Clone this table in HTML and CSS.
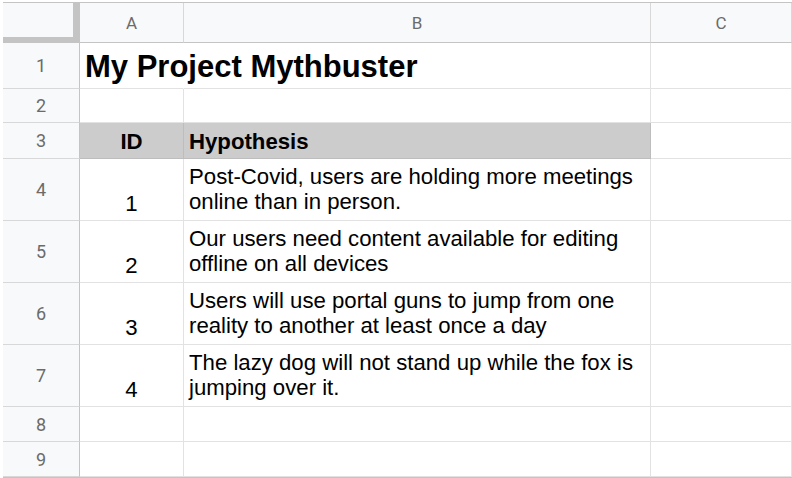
FILE: index.html
```html
<!DOCTYPE html>
<html>
<head>
<meta charset="utf-8">
<link rel="stylesheet" href="styles.css">
</head>
<body>
<div class="sheet">
  <div class="corner"></div>
  <div class="colhead">A</div>
  <div class="colhead">B</div>
  <div class="colhead">C</div>

  <div class="rowhead r1">1</div>
  <div class="cell r1 title">My Project Mythbuster</div>
  <div class="cell r1"></div>
  <div class="cell r1"></div>

  <div class="rowhead r2">2</div>
  <div class="cell r2"></div>
  <div class="cell r2"></div>
  <div class="cell r2"></div>

  <div class="rowhead r3">3</div>
  <div class="cell r3 th center">ID</div>
  <div class="cell r3 th">Hypothesis</div>
  <div class="cell r3"></div>

  <div class="rowhead r4">4</div>
  <div class="cell r4 center">1</div>
  <div class="cell r4 text">Post-Covid, users are holding more meetings online than in person.</div>
  <div class="cell r4"></div>

  <div class="rowhead r5">5</div>
  <div class="cell r5 center">2</div>
  <div class="cell r5 text">Our users need content available for editing offline on all devices</div>
  <div class="cell r5"></div>

  <div class="rowhead r6">6</div>
  <div class="cell r6 center">3</div>
  <div class="cell r6 text">Users will use portal guns to jump from one reality to another at least once a day</div>
  <div class="cell r6"></div>

  <div class="rowhead r7">7</div>
  <div class="cell r7 center">4</div>
  <div class="cell r7 text">The lazy dog will not stand up while the fox is jumping over it.</div>
  <div class="cell r7"></div>

  <div class="rowhead r8">8</div>
  <div class="cell r8"></div>
  <div class="cell r8"></div>
  <div class="cell r8"></div>

  <div class="rowhead r9">9</div>
  <div class="cell r9"></div>
  <div class="cell r9"></div>
  <div class="cell r9"></div>
</div>
</body>
</html>
```

FILE: styles.css
```css
html, body {
  margin: 0;
  padding: 0;
  background: #ffffff;
}

body {
  padding: 2px 0 0 3px;
  overflow: hidden;
  font-family: "Liberation Sans", Arial, sans-serif;
}

.sheet {
  display: grid;
  grid-template-columns: 77px 104px 467px 1fr;
  grid-template-rows: 40px 46px 34px 36px 62px 62px 62px 62px 35px 35px;
  border-top: 1px solid #c4c4c4;
  border-bottom: 1px solid #c4c4c4;
  width: 789px;
}

.corner {
  background: #f8f9fa;
  border-right: 1px solid #c4c4c4;
  border-bottom: 1px solid #c4c4c4;
  box-shadow: inset -6px -5px 0 #c4c4c4;
}

.colhead {
  background: #f8f9fa;
  border-right: 1px solid #d8d8d8;
  border-bottom: 1px solid #c4c4c4;
  color: #6b6b6b;
  font-family: Roboto, "Liberation Sans", sans-serif;
  font-size: 17px;
  display: flex;
  align-items: center;
  justify-content: center;
}

.rowhead {
  background: #f8f9fa;
  border-right: 1px solid #c4c4c4;
  border-bottom: 1px solid #d8d8d8;
  color: #6b6b6b;
  font-family: Roboto, "Liberation Sans", sans-serif;
  font-size: 18px;
  display: flex;
  align-items: center;
  justify-content: center;
}

.cell {
  border-right: 1px solid #e2e2e2;
  border-bottom: 1px solid #e2e2e2;
  color: #000000;
  font-size: 22.2px;
  line-height: 25px;
  padding: 0 5px 4px 5px;
  display: flex;
  flex-direction: column;
  justify-content: flex-end;
  min-width: 0;
}

.text {
  padding-bottom: 6px;
}

.center {
  text-align: center;
  align-items: center;
}

.title {
  font-size: 31px;
  font-weight: bold;
  line-height: 36px;
  white-space: nowrap;
  overflow: visible;
  padding-bottom: 3px;
  border-right-color: transparent;
}

.th {
  background: #cccccc;
  font-weight: bold;
  border-right-color: #bdbdbd;
  border-bottom-color: #bdbdbd;
}
```
